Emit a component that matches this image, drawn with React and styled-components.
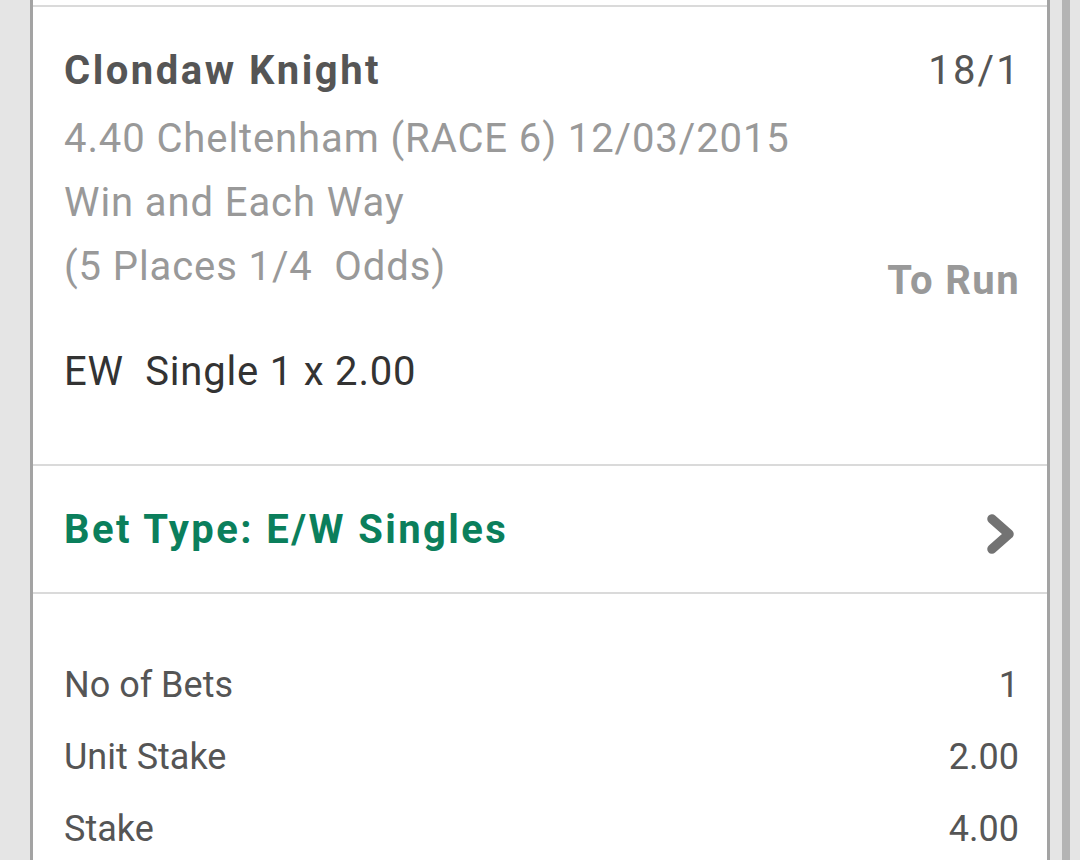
import React from "react";
import styled, { createGlobalStyle } from "styled-components";

const GlobalStyle = createGlobalStyle`
  html, body {
    margin: 0;
    padding: 0;
    background-color: #e5e5e5;
    font-family: Roboto, "Liberation Sans", Arial, sans-serif;
  }
`;

const StyledPage = styled.div`
  display: flex;
  height: 860px;
  overflow: hidden;
`;

const StyledGutter = styled.div`
  width: ${(props) => props.$width}px;
  flex-shrink: 0;
  background-color: ${(props) => props.$color || "#e5e5e5"};
`;

const StyledBetSlip = styled.main`
  width: 1014px;
  flex-shrink: 0;
  background-color: #fff;
  border-left: 3px solid #a3a3a3;
  border-right: 3px solid #a3a3a3;
`;

const StyledSection = styled.section`
  border-bottom: 2px solid #dadada;
`;

const StyledTopStub = styled(StyledSection)`
  height: 5px;
`;

const StyledSelection = styled(StyledSection)`
  padding: 40px 28px 68px 31px;
`;

const StyledTitleRow = styled.header`
  display: flex;
  justify-content: space-between;
  line-height: 48px;
  font-size: 40px;
  color: #555;
`;

const HorseName = styled.h2`
  margin: 0;
  font-size: 40px;
  font-weight: 700;
  letter-spacing: 2.5px;
`;

const Odds = styled.span`
  font-weight: 400;
  letter-spacing: 2.2px;
  margin-right: -2px;
`;

const StyledDetailsRow = styled.div`
  display: flex;
  justify-content: space-between;
  margin-top: 12px;
`;

const StyledDetails = styled.div`
  font-size: 40px;
  line-height: 64px;
  letter-spacing: 0.9px;
  color: #999;
`;

const Status = styled.strong`
  align-self: flex-end;
  font-size: 40px;
  line-height: 36px;
  letter-spacing: 1.4px;
  margin-right: -1px;
  color: #999;
  font-weight: 700;
`;

const BetLine = styled.p`
  margin: 49px 0 0;
  font-size: 40px;
  line-height: 48px;
  letter-spacing: 0.8px;
  color: #333;
  white-space: pre;
`;

const StyledBetTypeRow = styled(StyledSection)`
  display: flex;
  justify-content: space-between;
  align-items: center;
  padding: 39px 31px 37px 31px;
`;

const BetTypeLabel = styled.span`
  font-size: 40px;
  line-height: 48px;
  font-weight: 700;
  letter-spacing: 2.4px;
  color: #0b7f5c;
`;

const Chevron = styled.svg`
  width: 30px;
  height: 42px;
  margin-top: 8px;
`;

const StyledSummary = styled.section`
  padding: 55px 28px 0 31px;
`;

const StyledSummaryRow = styled.div`
  display: flex;
  justify-content: space-between;
  font-size: 36px;
  line-height: 72px;
  color: #555;
`;

const summary = [
  { label: "No of Bets", value: "1" },
  { label: "Unit Stake", value: "2.00" },
  { label: "Stake", value: "4.00" },
];

export default function App() {
  return (
    <>
      <GlobalStyle />
      <StyledPage>
        <StyledGutter $width={30} />
        <StyledBetSlip>
          <StyledTopStub />
          <StyledSelection>
            <StyledTitleRow>
              <HorseName>Clondaw Knight</HorseName>
              <Odds>18/1</Odds>
            </StyledTitleRow>
            <StyledDetailsRow>
              <StyledDetails>
                <div>4.40 Cheltenham (RACE 6) 12/03/2015</div>
                <div>Win and Each Way</div>
                <div>(5 Places 1/4&nbsp; Odds)</div>
              </StyledDetails>
              <Status>To Run</Status>
            </StyledDetailsRow>
            <BetLine>EW  Single 1 x 2.00</BetLine>
          </StyledSelection>
          <StyledBetTypeRow>
            <BetTypeLabel>Bet Type: E/W Singles</BetTypeLabel>
            <Chevron viewBox="0 0 30 42">
              <polyline
                points="6,6 23,21 6,36"
                fill="none"
                stroke="#737373"
                strokeWidth="9.5"
                strokeLinejoin="round"
                strokeLinecap="round"
              />
            </Chevron>
          </StyledBetTypeRow>
          <StyledSummary>
            {summary.map((row) => (
              <StyledSummaryRow key={row.label}>
                <span>{row.label}</span>
                <span>{row.value}</span>
              </StyledSummaryRow>
            ))}
          </StyledSummary>
        </StyledBetSlip>
        <StyledGutter $width={12} />
        <StyledGutter $width={8} $color="#b4b4b4" />
        <StyledGutter $width={10} />
      </StyledPage>
    </>
  );
}
